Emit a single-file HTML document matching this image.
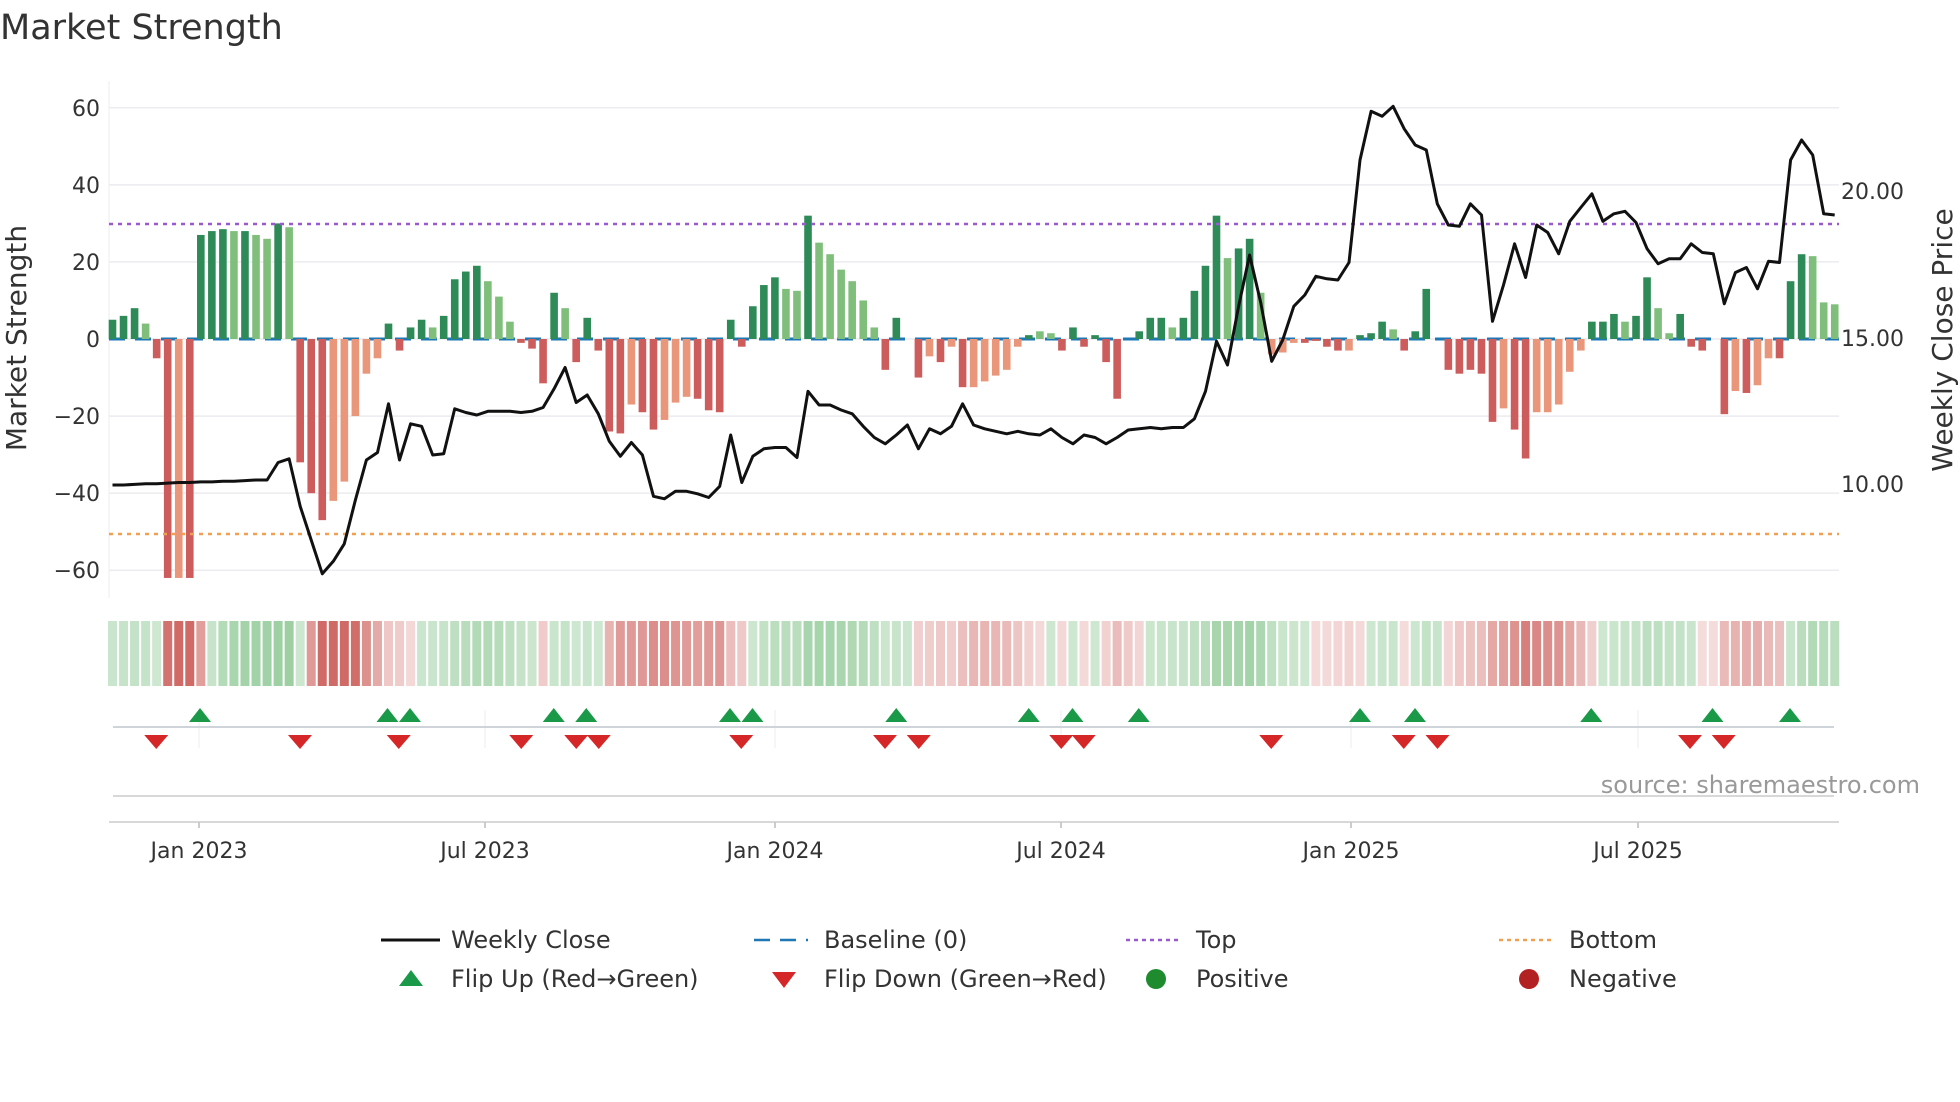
<!DOCTYPE html>
<html><head><meta charset="utf-8">
<style>
html,body{margin:0;padding:0;background:#fff;width:1960px;height:1102px;overflow:hidden;font-family:"DejaVu Sans","Liberation Sans",sans-serif;}
svg{position:absolute;left:0;top:0}
svg text{font-family:"DejaVu Sans","Liberation Sans",sans-serif;fill:#333}
</style></head>
<body>
<svg id="s" width="1960" height="1102" xmlns="http://www.w3.org/2000/svg">
<text x="0" y="39" font-size="35" fill="#333">Market Strength</text>
<g id="grid"></g>
<g id="bars"></g>
<g id="strip"></g>
<g id="tri"></g>
<path id="price" fill="none" stroke="#111" stroke-width="3" stroke-linejoin="round"/>
<g font-size="22" text-anchor="end">
<text x="100" y="116">60</text><text x="100" y="193">40</text><text x="100" y="270">20</text>
<text x="100" y="347">0</text><text x="100" y="424">−20</text><text x="100" y="501">−40</text><text x="100" y="578">−60</text>
</g>
<g font-size="22">
<text x="1841" y="199">20.00</text><text x="1841" y="346">15.00</text><text x="1841" y="492">10.00</text>
</g>
<text transform="translate(26,338) rotate(-90)" font-size="28" text-anchor="middle">Market Strength</text>
<text transform="translate(1952,340) rotate(-90)" font-size="28" text-anchor="middle">Weekly Close Price</text>
<text x="1920" y="793" font-size="24" text-anchor="end" style="fill:#999">source: sharemaestro.com</text>
<g font-size="22" text-anchor="middle">
<text x="199" y="858">Jan 2023</text><text x="485" y="858">Jul 2023</text><text x="775" y="858">Jan 2024</text>
<text x="1061" y="858">Jul 2024</text><text x="1351" y="858">Jan 2025</text><text x="1638" y="858">Jul 2025</text>
</g>
<g font-size="24">
<line x1="381" y1="940" x2="440" y2="940" stroke="#111" stroke-width="3"/>
<text x="451" y="948">Weekly Close</text>
<line x1="754" y1="940" x2="808" y2="940" stroke="#1f77b4" stroke-width="2.5" stroke-dasharray="16,10"/>
<text x="824" y="948">Baseline (0)</text>
<line x1="1126" y1="940" x2="1181" y2="940" stroke="#9b59d0" stroke-width="2.5" stroke-dasharray="4,4"/>
<text x="1196" y="948">Top</text>
<line x1="1499" y1="940" x2="1554" y2="940" stroke="#f0a050" stroke-width="2.5" stroke-dasharray="4,4"/>
<text x="1569" y="948">Bottom</text>
<polygon points="399,986 411,970 423,986" fill="#1a9a48"/>
<text x="451" y="987">Flip Up (Red→Green)</text>
<polygon points="772,972 796,972 784,988" fill="#d62728"/>
<text x="824" y="987">Flip Down (Green→Red)</text>
<circle cx="1156" cy="979" r="10" fill="#1e8c2e"/>
<text x="1196" y="987">Positive</text>
<circle cx="1529" cy="979" r="10" fill="#b22222"/>
<text x="1569" y="987">Negative</text>
</g>
</svg>
<script>
var NS="http://www.w3.org/2000/svg";
function el(p,t,a){var e=document.createElementNS(NS,t);for(var k in a)e.setAttribute(k,a[k]);p.appendChild(e);return e;}
var V=[5,6,8,4,-5,-62,-62,-62,27,28,28.5,28,28,27,26,30,29,-32,-40,-47,-42,-37,-20,-9,-5,4,-3,3,5,3,6,15.5,17.5,19,15,11,4.5,-1,-2.5,-11.5,12,8,-6,5.5,-3,-24,-24.5,-17,-19,-23.5,-21,-16.5,-15,-15.5,-18.5,-19,5,-2,8.5,14,16,13,12.5,32,25,22,18,15,10,3,-8,5.5,0,-10,-4.5,-6,-2,-12.5,-12.5,-11,-9.5,-8,-2,1,2,1.5,-3,3,-2,1,-6,-15.5,0,2,5.5,5.5,3,5.5,12.5,19,32,21,23.5,26,12,-4,-3.5,-1,-1,-0.5,-2,-3,-3,1,1.5,4.5,2.5,-3,2,13,0,-8,-9,-8,-9,-21.5,-18,-23.5,-31,-19,-19,-17,-8.5,-3,4.5,4.5,6.5,4.5,6,16,8,1.5,6.5,-2,-3,0,-19.5,-13.5,-14,-12,-5,-5,15,22,21.5,9.5,9];
var P=[388,388,387.5,387,387,386.5,386,386,385.5,385.5,385,385,384.5,384,384,370,367,405,432,459,449,435,400,368,362,323,368,339,341,364,363,327,330,332,329,329,329,330,329,326,311,294,322,316,331,353,365,354,364,397,399,393,393,395,398,389,348,386,365,359,358,358,366,313,324,324,328,331,341,350,355,348,340,359,343,347,341,323,340,343,345,347,345,347,348,343,350,355,348,350,355,350,344,343,342,343,342,342,335,313,273,292,245,204,242,289,272,245,236,221,223,224,210,128,89,93,85,103,116,120,163,180,181,163,172,257,228,195,222,180,186,203,177,166,155,177,171,169,178,199,211,207,207,195,202,203,243,218,214,231,209,210,128,112,124,171,172];
var L={3:1,6:1,11:1,13:1,14:1,16:1,20:1,21:1,22:1,23:1,24:1,29:1,34:1,35:1,36:1,41:1,47:1,50:1,51:1,52:1,61:1,62:1,64:1,65:1,66:1,67:1,68:1,69:1,74:1,76:1,78:1,79:1,80:1,81:1,82:1,84:1,85:1,96:1,101:1,104:1,105:1,106:1,107:1,112:1,116:1,126:1,129:1,130:1,131:1,132:1,133:1,137:1,140:1,141:1,147:1,149:1,150:1,154:1,155:1,156:1};
function X(i){return 112.5+11.04*i;}
var Y0=339,U=3.854;
var g=document.getElementById('grid');
[60,40,20,0,-20,-40,-60].forEach(function(v){el(g,'line',{x1:109,x2:1839,y1:Y0-v*U,y2:Y0-v*U,stroke:'#ececf0','stroke-width':1.5});});
el(g,'line',{x1:109,x2:109,y1:81,y2:598,stroke:'#eee','stroke-width':1});
var b=document.getElementById('bars');
el(b,'line',{x1:109,x2:1839,y1:Y0,y2:Y0,stroke:'#1f77b4','stroke-width':3,'stroke-dasharray':'16,10'});
V.forEach(function(v,i){if(!v)return;var c=v>0?(L[i]?'#7fbf7b':'#2e8b57'):(L[i]?'#e9967a':'#cd5c5c');
var h=Math.abs(v)*U;el(b,'rect',{x:X(i)-3.8,y:v>0?Y0-h:Y0,width:7.6,height:h,fill:c});});
el(b,'line',{x1:109,x2:1839,y1:224,y2:224,stroke:'#9b59d0','stroke-width':2.5,'stroke-dasharray':'4,5'});
el(b,'line',{x1:109,x2:1839,y1:534,y2:534,stroke:'#f0a050','stroke-width':2.5,'stroke-dasharray':'4,5'});
var d='';P.forEach(function(y,i){d+=(i?'L':'M')+(X(i)).toFixed(1)+','+(y*1.25).toFixed(1);});
document.getElementById('price').setAttribute('d',d);
var s=document.getElementById('strip'),e=0;
V.forEach(function(v,i){e=e*0.55+v*0.45;var a=Math.min(1,Math.abs(e)/30);
var c=e>=0?'rgba(80,170,90,'+(0.28+0.3*a)+')':'rgba(200,80,75,'+(0.2+0.65*a)+')';
el(s,'rect',{x:X(i)-4.5,y:621,width:9,height:65,fill:c});});
var t=document.getElementById('tri');
[199,485,775,1061,1351,1638].forEach(function(x){el(t,'line',{x1:x,x2:x,y1:710,y2:748,stroke:'#eee','stroke-width':1});el(t,'line',{x1:x,x2:x,y1:822,y2:828,stroke:'#bbb','stroke-width':1.5});});
el(t,'line',{x1:113,x2:1834,y1:727,y2:727,stroke:'#cfd3da','stroke-width':2});
el(t,'line',{x1:113,x2:1834,y1:796,y2:796,stroke:'#ccc','stroke-width':1.5});
el(t,'line',{x1:109,x2:1839,y1:822,y2:822,stroke:'#ccc','stroke-width':1.5});
[160,310,328,443,469,584,602,717,823,858,911,1088,1132,1273,1370,1432].forEach(function(x){x*=1.25;el(t,'polygon',{points:(x-11)+',722 '+x+',708 '+(x+11)+',722',fill:'#1a9a48'});});
[125,240,319,417,461,479,593,708,735,849,867,1017,1123,1150,1352,1379].forEach(function(x){x*=1.25;el(t,'polygon',{points:(x-12)+',735 '+(x+12)+',735 '+x+',749',fill:'#d62728'});});
</script>
</body></html>
